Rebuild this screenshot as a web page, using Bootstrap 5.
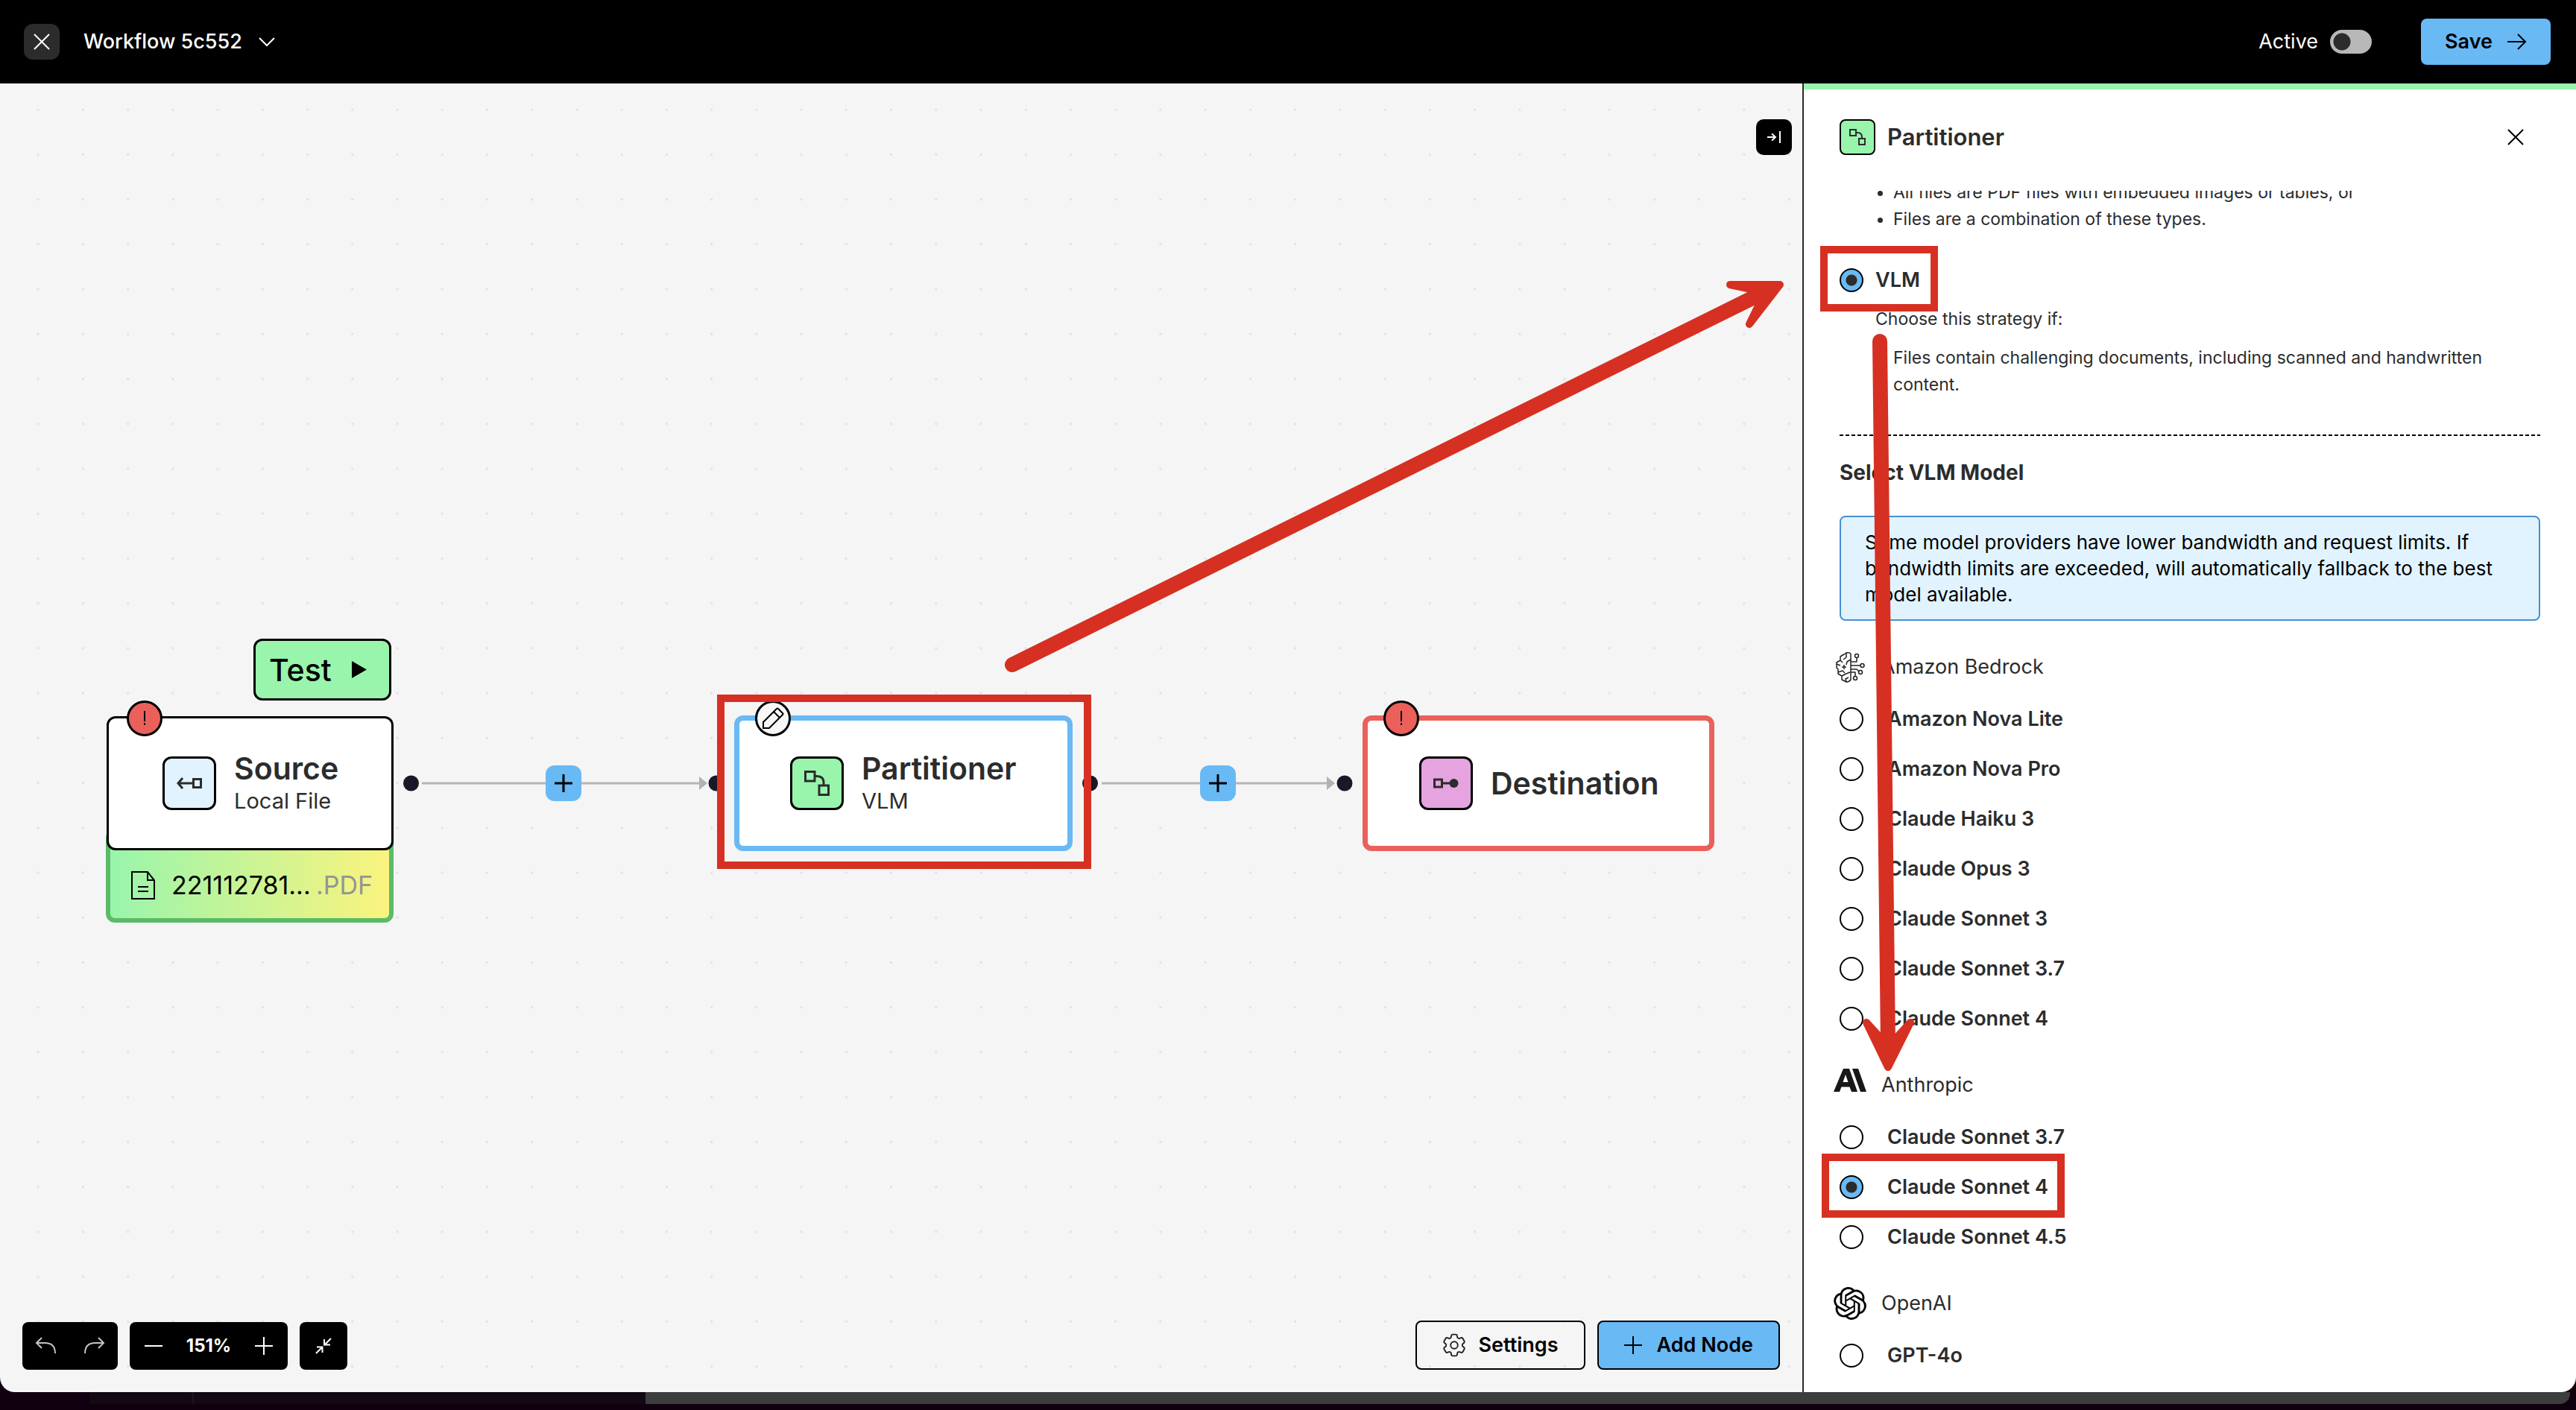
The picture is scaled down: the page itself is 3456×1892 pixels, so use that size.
<!DOCTYPE html>
<html lang="en">
<head>
<meta charset="utf-8">
<meta name="viewport" content="width=device-width, initial-scale=1">
<title>Workflow 5c552</title>
<link href="https://cdn.jsdelivr.net/npm/bootstrap@5.3.0/dist/css/bootstrap.min.css" rel="stylesheet">
<style>
  :root { --ink:#2c2c2c; --sky:#69b9f5; --mint:#99f5ac; --coral:#eb605b; --mark:#d63022; --canvas:#f5f5f5; }
  body { font-family: Inter, "Liberation Sans", sans-serif; font-size:27px; line-height:36px; color:var(--ink); background:#10000f; overflow:hidden; }
  svg { display:block; flex:none; }
  button { font-family:inherit; }
  .topbar { height:112px; background:#000; color:#fff; padding:0 34px 0 32px; }
  .tile { width:48px; height:48px; border-radius:12px; padding:0; border:0; display:flex; align-items:center; justify-content:center; }
  .tile-dim { background:#2c2c2c; color:#fff; }
  .tile-edge { border:2px solid #000; border-radius:8px; }
  .flow-name { background:none; border:0; color:#fff; font-weight:500; padding:0; gap:22px; }
  .power { gap:16px; }
  .power .form-check-input { width:56px; height:32px; margin:0; border:0; border-radius:16px; background-color:#b8b8b8; background-size:32px 32px;
    background-image:radial-gradient(circle at center, #2c2c2c 11px, transparent 12px); background-position:left center; }
  .btn-flow { height:62px; font-size:27px; line-height:36px; font-weight:600; color:#000; border-radius:8px; padding:0 34px; display:flex; align-items:center; }
  .btn-save { padding:0 32px; margin-left:66px; }
  .btn-sky, .btn-sky:hover { background:var(--sky); color:#000; }
  .btn-line { border:2px solid #000; height:66px; }

  .stage { background:#10000f; }
  .window { border-radius:0 0 20px 20px; overflow:hidden; min-height:0; }
  .board { background:var(--canvas); min-width:0; overflow:hidden; }
  .dots, .marks { position:absolute; left:0; top:0; pointer-events:none; }
  .dots { width:100%; height:100%; }
  .marks { z-index:20; }
  .fold { position:absolute; right:14px; top:48px; background:#000; color:#fff; border-radius:10px; }
  .node { position:absolute; height:180px; background:#fff; border:3px solid #000; border-radius:12px; display:flex; align-items:center; }
  .node-name { font-size:41px; line-height:48px; font-weight:600; color:var(--ink); }
  .node-kind { font-size:29px; line-height:40px; }
  .node-icon { width:72px; height:72px; border:3px solid #000; border-radius:12px; display:flex; align-items:center; justify-content:center; flex:none; }
  .node-flag { position:absolute; top:-24px; left:24px; width:48px; height:48px; border:3px solid #000; border-radius:50%; background:var(--coral); display:flex; align-items:center; justify-content:center; }
  .node-part .node-flag, .node-dest .node-flag { top:-27px; left:21px; }
  .node-source { left:143px; top:849px; width:385px; padding-left:72px; gap:24px; }
  .node-part { left:985px; top:848px; width:454px; height:182px; border:7px solid var(--sky); padding-left:68px; gap:24px; }
  .node-dest { left:1828px; top:848px; width:472px; height:182px; border:7px solid var(--coral); padding-left:69px; gap:24px; }
  .node-file { position:absolute; left:142px; top:1000px; width:386px; height:126px; border:6px solid #5bbb67; border-radius:12px; background:linear-gradient(90deg,#99f5ac,#fbf37e);
    font-size:34px; line-height:44px; color:#000; padding:26px 22px 0 28px; display:flex; align-items:center; }
  .file-name { margin-left:22px; }
  .btn-test, .btn-test:hover { position:absolute; left:340px; top:745px; width:185px; height:83px; background:var(--mint); color:#000; border:3px solid #000; border-radius:12px; font-size:41px; font-weight:500; line-height:48px; padding:0 0 0 18px; display:flex; align-items:center; gap:27px; }
  .btn-plus { position:absolute; top:915px; background:var(--sky); color:#000; }
  .dock { position:absolute; left:30px; right:30px; bottom:30px; }
  .dock-group { background:#000; color:#fff; border-radius:8px; height:64px; }
  .dock-group button { background:none; border:0; padding:0; color:inherit; display:flex; }
  .zoom-now { font-size:24px; font-weight:700; }

  .panel { flex:0 0 1038px; background:#fff; border-left:2px solid var(--ink); border-radius:0; }
  .panel-line { height:8px; background:var(--mint); }
  .panel-head { height:136px; padding:40px 70px 48px 48px; }
  .panel-title { font-size:31px; line-height:40px; font-weight:600; margin:0; }
  .btn-x { background:none; border:0; padding:0; color:#000; line-height:0; }
  .panel-body { padding:0 48px; overflow:hidden; min-height:0; }
  .hints { font-size:23px; margin:0; padding-left:72px; }
  .hints-cut { margin-top:-16px; }
  .hints-note { font-size:23px; margin:16px 0; padding-left:48px; }
  .pick { gap:16px; height:36px; }
  .pick .form-check-input { width:32px; height:32px; margin:0; border:2px solid #000; flex:none; background-color:#fff; }
  .pick .form-check-input:checked { background-color:var(--sky); background-image:radial-gradient(circle, #2c2c2c 7px, transparent 8px); background-size:100% 100%; }
  .pick label { font-weight:600; }
  .pick-list { display:flex; flex-direction:column; gap:31px; margin:30px 0 49px; }
  .pick-list .pick { gap:32px; }
  .pick-main { margin-top:46px; }
  .rule { height:2px; margin:49px 0 31px; background:repeating-linear-gradient(90deg,#000 0 5px,transparent 5px 8px); }
  .section-name { font-size:28px; line-height:36px; font-weight:700; margin:0 0 40px; }
  .limits { border:2px solid #4690d2; border-radius:8px; background:#e1f3ff; color:#000; padding:16px 32px; font-size:26px; line-height:35px; margin:0 0 40px; }
  .maker { height:44px; gap:20px; margin-left:-8px; font-weight:400; }
  .maker svg { width:44px; height:44px; }
  .bottom-edge { height:24px; padding:0 8px; }
  .bottom-shade { height:16px; background:#120912; margin-left:112px; border-right:2px solid #1d141d; }
  .bottom-bar { height:16px; background:#3d3d3d; border-radius:0 0 14px 0; }
</style>
</head>
<body>
<div class="stage vh-100 d-flex flex-column position-relative">
  <div class="window d-flex flex-column flex-grow-1">
    <header class="topbar d-flex align-items-center flex-shrink-0">
      <button class="tile tile-dim" aria-label="Close workflow">
        <svg width="22" height="22" viewBox="0 0 22 22" fill="none" stroke="currentColor" stroke-width="2"><path d="M1 1 21 21M21 1 1 21"/></svg>
      </button>
      <button class="flow-name d-flex align-items-center ms-4 ps-2">Workflow 5c552
        <svg width="22" height="14" viewBox="0 0 22 14" fill="none" stroke="currentColor" stroke-width="2"><path d="M1 2 11 12 21 2"/></svg>
      </button>
      <div class="power d-flex align-items-center ms-auto">
        <label for="active">Active</label>
        <input class="form-check-input" type="checkbox" role="switch" id="active">
      </div>
      <button class="btn btn-flow btn-sky btn-save border-0 gap-3">Save
        <svg class="ms-1" width="26" height="22" viewBox="0 0 26 22" fill="none" stroke="currentColor" stroke-width="2"><path d="M0 11H24M14 1 24 11 14 21"/></svg>
      </button>
    </header>

    <div class="d-flex flex-grow-1" style="min-height:0">
      <main class="board position-relative flex-grow-1">
        <svg class="dots" aria-hidden="true">
          <defs><pattern id="grid" x="21" y="5" width="60.23" height="60.23" patternUnits="userSpaceOnUse"><circle cx="30.2" cy="30.2" r="1.7" fill="#e2e2e2"/></pattern></defs>
          <rect width="100%" height="100%" fill="url(#grid)"/>
        </svg>
        <svg class="dots" aria-hidden="true">
          <g stroke="#b6b6b6" stroke-width="3"><path d="M566 939H940M1478 939H1782"/></g>
          <g fill="#b1b1b9"><path d="M938 930 949 939 938 948ZM1780 930 1791 939 1780 948Z"/></g>
          <g fill="#181828"><circle cx="551.5" cy="939" r="10.5"/><circle cx="961" cy="939" r="10.5"/><circle cx="1462.500" cy="939" r="10.5"/><circle cx="1804" cy="939" r="10.5"/></g>
        </svg>

        <button class="tile fold" aria-label="Collapse panel">
          <svg width="20" height="16" viewBox="0 0 20 16" fill="none" stroke="currentColor" stroke-width="2"><path d="M1 8H12M7 3.500 12 8 7 12.500"/><path d="M18 0V16"/></svg>
        </button>

        <button class="btn btn-test">Test
          <svg width="20" height="23" viewBox="0 0 20 23"><path d="M0 0 20 11.500 0 23Z"/></svg>
        </button>
        <div class="node-file">
          <svg width="32" height="38" viewBox="0 0 32 38" fill="none" stroke="#000" stroke-width="2"><path d="M1 1H22L31 12V37H1Z"/><path d="M22 1V12H31M9 21H23M9 27H23"/></svg>
          <span class="file-name">221112781...</span><span class="ms-auto" style="color:#949494">.PDF</span>
        </div>
        <section class="node node-source">
          <span class="node-flag"><svg width="4" height="20" viewBox="0 0 4 20" stroke="#000" stroke-width="2"><path d="M2 0V14M2 16V19"/></svg></span>
          <span class="node-icon" style="background:#e1f3ff">
            <svg width="34" height="18" viewBox="0 0 34 18" fill="none" stroke="#2c2c2c" stroke-width="3"><path d="M22 9H2M8 2 2 9 8 16"/><path d="M22.500 3.500H32.500V14.500H22.500Z"/></svg>
          </span>
          <div><div class="node-name">Source</div><div class="node-kind">Local File</div></div>
        </section>
        <section class="node node-part">
          <span class="node-flag" style="background:#f7f7f7">
            <svg width="30" height="30" viewBox="0 0 30 30" fill="none" stroke="#000" stroke-width="2"><path d="M2 28V20L20 2Q21 1 22 2L28 8Q29 9 28 10L10 28Z"/><path d="M16 6 24 14"/></svg>
          </span>
          <span class="node-icon" style="background:var(--mint)">
            <svg width="34" height="34" viewBox="0 0 34 34" fill="none" stroke="#2c2c2c" stroke-width="3"><path d="M1.500 1.500H14V14H1.500ZM20 20H32.500V32.500H20ZM14 7.500H17Q26 7.500 26 16V20"/></svg>
          </span>
          <div><div class="node-name">Partitioner</div><div class="node-kind">VLM</div></div>
        </section>
        <section class="node node-dest">
          <span class="node-flag"><svg width="4" height="20" viewBox="0 0 4 20" stroke="#000" stroke-width="2"><path d="M2 0V14M2 16V19"/></svg></span>
          <span class="node-icon" style="background:#e5a3df">
            <svg width="34" height="14" viewBox="0 0 34 14" fill="none" stroke="#2c2c2c" stroke-width="3"><path d="M1.500 2H11.500V12H1.500ZM12 7H24"/><circle cx="27.500" cy="7" r="6" fill="#2c2c2c" stroke="none"/></svg>
          </span>
          <div class="node-name">Destination</div>
        </section>
        <button class="tile btn-plus" style="left:732px" aria-label="Insert node"><svg width="26" height="26" viewBox="0 0 26 26" stroke="currentColor" stroke-width="3"><path d="M1 13H25M13 1V25"/></svg></button>
        <button class="tile btn-plus" style="left:1610px" aria-label="Insert node"><svg width="26" height="26" viewBox="0 0 26 26" stroke="currentColor" stroke-width="3"><path d="M1 13H25M13 1V25"/></svg></button>

        <div class="dock d-flex align-items-end gap-3">
          <div class="dock-group d-flex align-items-center justify-content-between px-3" style="width:128px;color:#c4c4c4">
            <button aria-label="Undo"><svg width="32" height="24" viewBox="0 0 32 24" fill="none" stroke="currentColor" stroke-width="2"><path d="M10 1 3 8 10 15M3 8H14Q28 8 28 22"/></svg></button>
            <button aria-label="Redo"><svg width="32" height="24" viewBox="0 0 32 24" fill="none" stroke="currentColor" stroke-width="2"><path d="M22 1 29 8 22 15M29 8H18Q4 8 4 22"/></svg></button>
          </div>
          <div class="dock-group d-flex align-items-center justify-content-between" style="width:212px;padding:0 20px">
            <button aria-label="Zoom out"><svg width="24" height="24" viewBox="0 0 24 24" stroke="currentColor" stroke-width="2"><path d="M0 12H24"/></svg></button>
            <span class="zoom-now">151%</span>
            <button aria-label="Zoom in"><svg width="24" height="24" viewBox="0 0 24 24" stroke="currentColor" stroke-width="2"><path d="M0 12H24M12 0V24"/></svg></button>
          </div>
          <div class="dock-group d-flex align-items-center justify-content-center" style="width:64px">
            <button aria-label="Fit view"><svg width="24" height="24" viewBox="0 0 24 24" fill="none" stroke="currentColor" stroke-width="2"><path d="M22 2 14 10M13 3V10.500H21M2 22 10 14M3 13.500H10.500V21"/></svg></button>
          </div>
          <button class="btn btn-flow btn-line ms-auto gap-3">
            <svg width="32" height="32" viewBox="2 2 20 20" fill="none" stroke="#222" stroke-width="1.200" stroke-linejoin="round"><path d="M9.594 3.940c.09-.542.560-.940 1.110-.940h2.593c.550 0 1.020.398 1.110.940l.213 1.281c.063.374.313.686.645.870.074.040.147.083.220.127.324.196.720.257 1.075.124l1.217-.456a1.125 1.125 0 0 1 1.370.490l1.296 2.247a1.125 1.125 0 0 1-.260 1.431l-1.003.827c-.293.240-.438.613-.431.992a6.759 6.759 0 0 1 0 .255c-.007.378.138.750.430.990l1.005.828c.424.350.534.954.260 1.430l-1.298 2.247a1.125 1.125 0 0 1-1.369.491l-1.217-.456c-.355-.133-.750-.072-1.076.124a6.570 6.570 0 0 1-.220.128c-.331.183-.581.495-.644.869l-.213 1.280c-.090.543-.560.941-1.110.941h-2.594c-.550 0-1.020-.398-1.110-.940l-.213-1.281c-.062-.374-.312-.686-.644-.870a6.520 6.520 0 0 1-.220-.127c-.325-.196-.720-.257-1.076-.124l-1.217.456a1.125 1.125 0 0 1-1.369-.490l-1.297-2.247a1.125 1.125 0 0 1 .260-1.431l1.004-.827c.292-.240.437-.613.430-.992a6.932 6.932 0 0 1 0-.255c.007-.378-.138-.750-.430-.990l-1.004-.828a1.125 1.125 0 0 1-.260-1.430l1.297-2.247a1.125 1.125 0 0 1 1.370-.491l1.216.456c.356.133.751.072 1.076-.124.072-.044.146-.087.220-.128.332-.183.582-.495.644-.869l.214-1.281Z"/><circle cx="12" cy="12" r="3"/></svg>
            Settings
          </button>
          <button class="btn btn-flow btn-line btn-sky" style="gap:20px">
            <svg width="24" height="24" viewBox="0 0 24 24" stroke="currentColor" stroke-width="2"><path d="M0 12H24M12 0V24"/></svg>
            Add Node
          </button>
        </div>
      </main>

      <aside class="panel d-flex flex-column">
        <div class="panel-line flex-shrink-0"></div>
        <div class="panel-head d-flex align-items-center flex-shrink-0">
          <span class="tile tile-edge" style="background:var(--mint)">
            <svg width="22" height="22" viewBox="0 0 22 22" fill="none" stroke="#2c2c2c" stroke-width="2"><path d="M1 1H9V9H1ZM13 13H21V21H13ZM9 5H11Q17 5 17 11V13"/></svg>
          </span>
          <h2 class="panel-title ms-3">Partitioner</h2>
          <button class="btn-x ms-auto" aria-label="Close panel"><svg width="22" height="22" viewBox="0 0 22 22" fill="none" stroke="currentColor" stroke-width="2"><path d="M1 1 21 21M21 1 1 21"/></svg></button>
        </div>
        <form class="panel-body flex-grow-1">
          <ul class="hints hints-cut"><li>All files are PDF files with embedded images or tables, or</li><li>Files are a combination of these types.</li></ul>
          <div class="pick pick-main d-flex align-items-center">
            <input class="form-check-input" type="radio" name="strategy" id="vlm" checked><label for="vlm">VLM</label>
          </div>
          <p class="hints-note">Choose this strategy if:</p>
          <ul class="hints"><li>Files contain challenging documents, including scanned and handwritten content.</li></ul>
          <div class="rule"></div>
          <h3 class="section-name">Select VLM Model</h3>
          <p class="limits">Some model providers have lower bandwidth and request limits. If bandwidth limits are exceeded, will automatically fallback to the best model available.</p>

          <div class="maker d-flex align-items-center">
            <svg viewBox="0 0 44 44" fill="none" stroke="#222" stroke-width="1.500" stroke-linejoin="round"><path d="M23 4V39Q21 42 17 42L11 39V34L6 31V25L4 23V16L9 13V8L14 5L17 3Q21 2 23 4M17 3V9L13 12M23 12 18 15 17 19M4 18 9 20M9 13 12 16M11 22H17M14 19V25M6 29 12 27 15 30M11 34 17 31 22 29M17 42 16 38 20 36"/><path d="M23 15H31V10M23 20H36M23 25H31L34 28M23 29H29V34"/><circle cx="31" cy="7" r="2.500"/><circle cx="38.500" cy="20" r="2.500"/><circle cx="36" cy="29" r="2.500"/><circle cx="29" cy="37" r="2.500"/></svg>
            <span>Amazon Bedrock</span>
          </div>
          <div class="pick-list">
            <div class="pick d-flex align-items-center"><input class="form-check-input" type="radio" name="model" id="m1"><label for="m1">Amazon Nova Lite</label></div>
            <div class="pick d-flex align-items-center"><input class="form-check-input" type="radio" name="model" id="m2"><label for="m2">Amazon Nova Pro</label></div>
            <div class="pick d-flex align-items-center"><input class="form-check-input" type="radio" name="model" id="m3"><label for="m3">Claude Haiku 3</label></div>
            <div class="pick d-flex align-items-center"><input class="form-check-input" type="radio" name="model" id="m4"><label for="m4">Claude Opus 3</label></div>
            <div class="pick d-flex align-items-center"><input class="form-check-input" type="radio" name="model" id="m5"><label for="m5">Claude Sonnet 3</label></div>
            <div class="pick d-flex align-items-center"><input class="form-check-input" type="radio" name="model" id="m6"><label for="m6">Claude Sonnet 3.7</label></div>
            <div class="pick d-flex align-items-center"><input class="form-check-input" type="radio" name="model" id="m7"><label for="m7">Claude Sonnet 4</label></div>
          </div>
          <div class="maker d-flex align-items-center">
            <svg viewBox="0 0 44 44" fill="#181818"><path d="M13 0H21L32 31H24L21.500 24.500H10.500L8 31H0ZM16 8 12.500 18H19.500Z" fill-rule="evenodd"/><path d="M25 0H33L44 31H36Z"/></svg>
            <span>Anthropic</span>
          </div>
          <div class="pick-list">
            <div class="pick d-flex align-items-center"><input class="form-check-input" type="radio" name="model" id="m8"><label for="m8">Claude Sonnet 3.7</label></div>
            <div class="pick d-flex align-items-center"><input class="form-check-input" type="radio" name="model" id="m9" checked><label for="m9">Claude Sonnet 4</label></div>
            <div class="pick d-flex align-items-center"><input class="form-check-input" type="radio" name="model" id="m10"><label for="m10">Claude Sonnet 4.5</label></div>
          </div>
          <div class="maker d-flex align-items-center">
            <svg viewBox="0 0 24 24" fill="#000"><path d="M22.2819 9.8211a5.9847 5.9847 0 0 0-.5157-4.9108 6.0462 6.0462 0 0 0-6.5098-2.9A6.0651 6.0651 0 0 0 4.9807 4.1818a5.9847 5.9847 0 0 0-3.9977 2.9 6.0462 6.0462 0 0 0 .7427 7.0966 5.98 5.98 0 0 0 .511 4.9107 6.051 6.051 0 0 0 6.5146 2.9001A5.9847 5.9847 0 0 0 13.2599 24a6.0557 6.0557 0 0 0 5.7718-4.2058 5.9894 5.9894 0 0 0 3.9977-2.9001 6.0557 6.0557 0 0 0-.7475-7.0729zm-9.022 12.6081a4.4755 4.4755 0 0 1-2.8764-1.0408l.1419-.0804 4.7783-2.7582a.7948.7948 0 0 0 .3927-.6813v-6.7369l2.02 1.1686a.071.071 0 0 1 .038.052v5.5826a4.504 4.504 0 0 1-4.4945 4.4944zm-9.6607-4.1254a4.4708 4.4708 0 0 1-.5346-3.0137l.142.0852 4.783 2.7582a.7712.7712 0 0 0 .7806 0l5.8428-3.3685v2.3324a.0804.0804 0 0 1-.0332.0615L9.74 19.9502a4.4992 4.4992 0 0 1-6.1408-1.6464zM2.3408 7.8956a4.485 4.485 0 0 1 2.3655-1.9728V11.6a.7664.7664 0 0 0 .3879.6765l5.8144 3.3543-2.0201 1.1685a.0757.0757 0 0 1-.071 0l-4.8303-2.7865A4.504 4.504 0 0 1 2.3408 7.872zm16.5963 3.8558L13.1038 8.364 15.1192 7.2a.0757.0757 0 0 1 .071 0l4.8303 2.7913a4.4944 4.4944 0 0 1-.6765 8.1042v-5.6772a.79.79 0 0 0-.407-.667zm2.0107-3.0231l-.142-.0852-4.7735-2.7818a.7759.7759 0 0 0-.7854 0L9.409 9.2297V6.8974a.0662.0662 0 0 1 .0284-.0615l4.8303-2.7866a4.4992 4.4992 0 0 1 6.6802 4.66zM8.3065 12.863l-2.02-1.1638a.0804.0804 0 0 1-.038-.0567V6.0742a4.4992 4.4992 0 0 1 7.3757-3.4537l-.142.0805L8.704 5.459a.7948.7948 0 0 0-.3927.6813zm1.0976-2.3654l2.602-1.4998 2.6069 1.4998v2.9994l-2.5974 1.4997-2.6067-1.4997Z"/></svg>
            <span>OpenAI</span>
          </div>
          <div class="pick-list mb-0">
            <div class="pick d-flex align-items-center"><input class="form-check-input" type="radio" name="model" id="m11"><label for="m11">GPT-4o</label></div>
          </div>
        </form>
      </aside>
    </div>
  </div>

  <footer class="bottom-edge d-flex flex-shrink-0">
    <div class="bottom-shade" style="width:140px"></div>
    <div class="bottom-shade ms-0 border-0" style="width:606px"></div>
    <div class="bottom-bar flex-grow-1"></div>
  </footer>

  <svg class="marks" width="3456" height="1892" viewBox="0 0 3456 1892" fill="none" stroke="#d63022" aria-hidden="true">
    <g stroke-width="10"><rect x="967" y="937" width="492" height="224"/><rect x="2447" y="335" width="148" height="78"/><rect x="2449" y="1553" width="316" height="76"/></g>
    <g stroke-width="20" stroke-linecap="round"><path d="M1358 892 2365 393"/><path d="M2522 458 2533 1400"/></g>
    <g stroke-width="10" stroke-linejoin="round" fill="#d63022"><path d="M2321 382 2388 382 2347 435 2362 404 2354 389Z"/><path d="M2504 1372 2533 1432 2563 1372 2541 1396 2526 1396Z"/></g>
  </svg>
</div>
<script src="https://cdn.jsdelivr.net/npm/bootstrap@5.3.0/dist/js/bootstrap.bundle.min.js"></script>
</body>
</html>
